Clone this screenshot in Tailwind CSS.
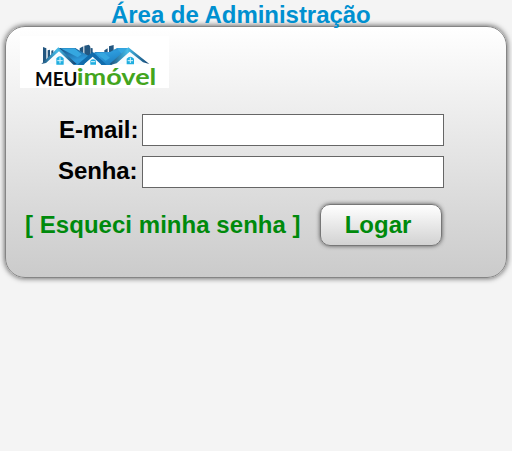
<!DOCTYPE html>
<html lang="pt-BR">
<head>
<meta charset="utf-8">
<title>Área de Administração</title>
<script src="https://cdn.jsdelivr.net/npm/@tailwindcss/browser@4"></script>
</head>
<body class="h-[451px] overflow-hidden bg-[#f4f4f4] font-['Liberation_Sans',Arial,sans-serif] text-[24px] leading-[28px] font-bold text-black">
<h1 class="relative z-10 h-[26px] pl-[111px] pt-px tracking-[-0.04px] whitespace-nowrap text-[#0090d0]">Área de Administração</h1>
<main class="ml-[5px] flex h-[252px] w-[502px] flex-col rounded-[20px] border border-[#858585] bg-linear-to-b from-white to-[#cbcbcb] shadow-[0_0_5px_1px_#777]">
  <svg class="mt-[9px] ml-[14px] h-[52px] w-[149px] shrink-0 overflow-visible" viewBox="18 12 447 156" role="img" aria-label="Meu imóvel">
    <defs>
      <linearGradient id="roof" x1="0" y1="0" x2="1" y2="1"><stop offset="0" stop-color="#164f82"/><stop offset=".5" stop-color="#2d9bdc"/><stop offset="1" stop-color="#1675b8"/></linearGradient>
      <linearGradient id="edge"><stop offset="0" stop-color="#1d4e78"/><stop offset=".45" stop-color="#45bce9"/><stop offset="1" stop-color="#113d6b"/></linearGradient>
    </defs>
    <path fill="#fff" d="M18 12h447v156H18z"/>
    <g fill="#23567f">
      <path d="M87 45l10 4v37l-10 6zM101 55l7-2v25l-7 5zM112 56l6-2v16l-6 5z"/>
      <path d="M197 49l11-6v24h-11zM211 41l14-3 4 6v32h-18zM230 48l6 1v26h-6zM271 55l10-6v20h-10zM285 43l14-4v23h-14zM301 53l10-3v12h-10z"/>
    </g>
    <path fill="#f7fcff" d="M99 96l39-37 40 38zM207 96l30-29 30 29zM308 97l40-38 40 36z"/>
    <path fill="url(#roof)" d="M132 48h52l50 30-25 21h-28zM235 68l8-8h51l-43 20zM309 48h36l-53 51h-30l-12-17z"/>
    <path fill="#35a7e0" d="M139 49h43l21 18-12 9zM246 63h24l18 14-13 9zM309 49h32l-18 17z"/>
    <path fill="#fff" d="M210 97l27-26 27 26z"/>
    <path fill="url(#edge)" d="M82 96l51-50 55 50-10 2-43-40-39 35z"/>
    <path fill="#116cac" d="M190 98l46-39 42 39-15 1-27-25-29 25z"/>
    <path fill="url(#edge)" d="M287 96l56-50 63 50-19-5-40-32-39 35-16 4z"/>
    <path fill="#20aee0" d="M127 98V79q11-12 22 0v19zM229 98V86q8-8 17 0v12zM338 97V80q11-12 22 0v17z"/>
    <path fill="none" stroke="#d8f5fd" stroke-width="3" d="M138 76v18M130 86h16M231 89h13M349 77v16M341 86h16"/>
    <text x="63" y="163" textLength="127" lengthAdjust="spacingAndGlyphs" font-family="Lato, sans-serif" font-size="55" font-weight="700" fill="#080808">MEU</text>
    <text x="188" y="160" textLength="239" lengthAdjust="spacingAndGlyphs" font-family="Lato, sans-serif" font-size="67" font-weight="700" fill="#43a51d">imóvel</text>
  </svg>
  <form class="flex flex-col">
    <label class="mt-[25px] flex h-[33px] items-center"><span class="w-[136px] pl-[53px] tracking-[-0.1px] whitespace-nowrap">E-mail:</span><input type="email" class="h-[32px] w-[302px] border border-[#666] bg-white px-2 outline-none"></label>
    <label class="mt-[9px] flex h-[33px] items-center"><span class="-mt-px w-[136px] pl-[52px] tracking-[-0.1px] whitespace-nowrap">Senha:</span><input type="password" class="h-[32px] w-[302px] border border-[#666] bg-white px-2 outline-none"></label>
    <div class="mt-[16px] flex items-center pl-[19px]">
      <a href="#" class="w-[295px] tracking-[0.04px] whitespace-nowrap text-[#008a0c]">[ Esqueci minha senha ]</a>
      <button type="button" class="h-[42px] w-[122px] rounded-[10px] border border-[#777] bg-linear-to-b from-white to-[#d2d2d2] pr-[6px] text-[#008a0c] shadow-[0_0_4px_#555]">Logar</button>
    </div>
  </form>
</main>
</body>
</html>
